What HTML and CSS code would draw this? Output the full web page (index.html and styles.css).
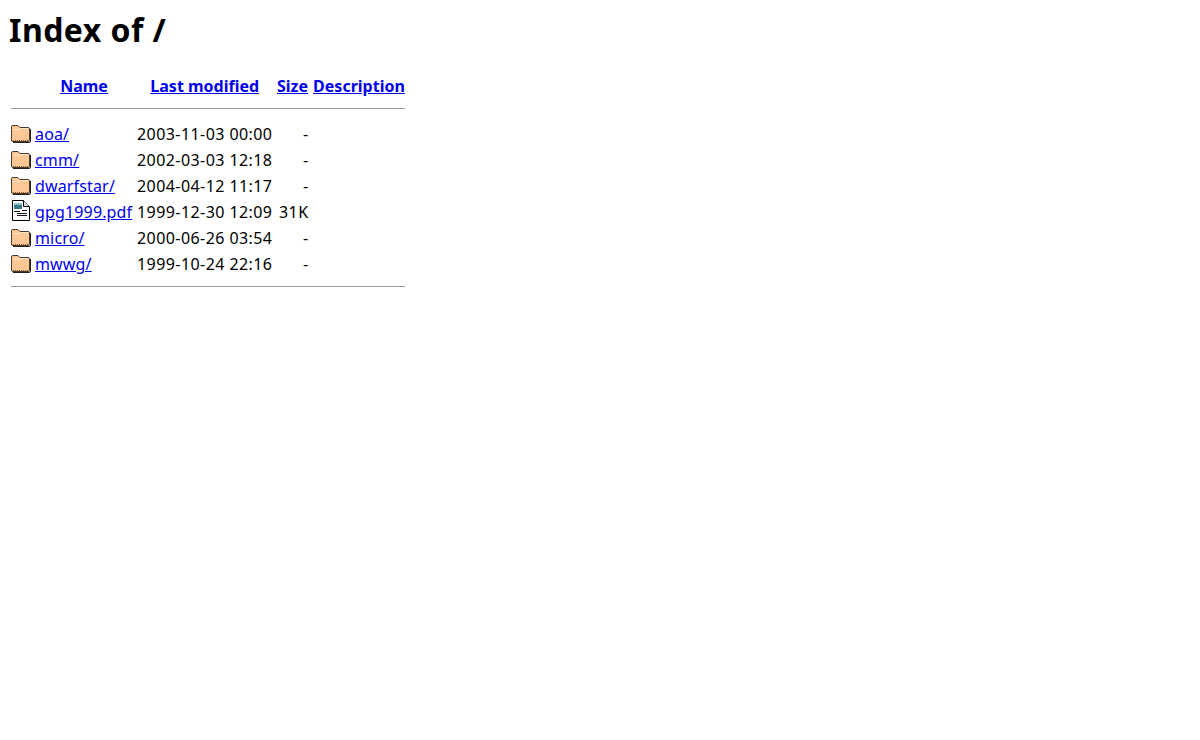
FILE: index.html
```html
<!DOCTYPE html>
<html>
<head>
<meta charset="utf-8">
<title>Index of /</title>
<link rel="stylesheet" href="styles.css">
</head>
<body>
<h1>Index of /</h1>
<table>
<tr class="head"><th class="c-icon"></th><th class="c-name"><a href="#">Name</a></th><th class="c-date"><a href="#">Last modified</a></th><th class="c-size"><a href="#">Size</a></th><th class="c-desc"><a href="#">Description</a></th></tr>
<tr><th colspan="5"><hr></th></tr>
<tr><td class="icon"><svg class="ico" viewBox="0 0 20 22"><use href="#folder"/></svg></td><td class="name"><a href="#">aoa/</a></td><td class="date">2003-11-03 00:00</td><td class="size">-</td><td></td></tr>
<tr><td class="icon"><svg class="ico" viewBox="0 0 20 22"><use href="#folder"/></svg></td><td class="name"><a href="#">cmm/</a></td><td class="date">2002-03-03 12:18</td><td class="size">-</td><td></td></tr>
<tr><td class="icon"><svg class="ico" viewBox="0 0 20 22"><use href="#folder"/></svg></td><td class="name"><a href="#">dwarfstar/</a></td><td class="date">2004-04-12 11:17</td><td class="size">-</td><td></td></tr>
<tr><td class="icon"><svg class="ico" viewBox="0 0 20 22"><use href="#doc"/></svg></td><td class="name"><a href="#">gpg1999.pdf</a></td><td class="date">1999-12-30 12:09</td><td class="size">31K</td><td></td></tr>
<tr><td class="icon"><svg class="ico" viewBox="0 0 20 22"><use href="#folder"/></svg></td><td class="name"><a href="#">micro/</a></td><td class="date">2000-06-26 03:54</td><td class="size">-</td><td></td></tr>
<tr><td class="icon"><svg class="ico" viewBox="0 0 20 22"><use href="#folder"/></svg></td><td class="name"><a href="#">mwwg/</a></td><td class="date">1999-10-24 22:16</td><td class="size">-</td><td></td></tr>
<tr><th colspan="5"><hr></th></tr>
</table>
<svg class="defs" width="0" height="0">
<defs>
<symbol id="folder" viewBox="0 0 20 22">
<path d="M0.500 5 Q0.500 3.500 2 3.500 H7 L9 5.500 H17 Q18.500 5.500 18.500 7 V18 Q18.500 19.500 17 19.500 H2 Q0.500 19.500 0.500 18 Z" fill="#fdc896" stroke="#4a3a2a" stroke-width="1"/>
<path d="M1.500 7.500 H9 L10 6.500 H17.500" fill="none" stroke="#ffe8cc" stroke-width="1"/>
<path d="M2 20.500 H18 Q19.500 20.500 19.500 19 V7" fill="none" stroke="#222" stroke-width="1"/>
<path d="M2 18.500 H18" stroke="#8a5a2a" stroke-width="1" stroke-dasharray="1 1"/>
</symbol>
<symbol id="doc" viewBox="0 0 20 22">
<path d="M1.500 0.500 H12.500 L18.500 6.500 V20.500 H1.500 Z" fill="#fff" stroke="#000" stroke-width="1"/>
<path d="M12.500 0.500 V6.500 H18.500" fill="#ddd" stroke="#000" stroke-width="1"/>
<rect x="3" y="3" width="8" height="6" fill="#3a7a88"/>
<rect x="3" y="3" width="8" height="2" fill="#88c8c0"/>
<path d="M3 11.500 H9 M11 10.500 H16 M6 13.500 H16 M6 15.500 H16" stroke="#111" stroke-width="1"/>
</symbol>
</defs>
</svg>
</body>
</html>
```
FILE: styles.css
```css
body {
  margin: 8px;
  background: #fff;
  color: #000;
  font-family: "Noto Sans", "Open Sans", sans-serif;
  font-size: 16px;
}
h1 {
  font-size: 32px;
  font-weight: 700;
  line-height: 44px;
  letter-spacing: 0.45px;
  margin: 0 0 19px 1px;
}
table {
  border-spacing: 2px;
}
th, td {
  padding: 1px;
}
td {
  height: 22px;
  white-space: nowrap;
}
a {
  color: #0000ee;
}
hr {
  margin: 8px 0 9px;
  border: 0;
  height: 1px;
  background: #9a9a9a;
}
.head th {
  padding: 2px 1px 0;
}
.c-icon { width: 20px; }
.c-name { width: 98px; }
.c-date { width: 135px; }
.c-size { width: 32px; }
.c-desc { width: 93px; white-space: nowrap; }
.icon { line-height: 0; }
.ico { width: 20px; height: 22px; display: block; }
.name { padding: 2px 1px 0; letter-spacing: 0.15px; }
.date { padding: 2px 1px 0; text-align: left; letter-spacing: 0.43px; }
.size { padding: 2px 1px 0; text-align: right; letter-spacing: 0.4px; }
.defs { position: absolute; }
```
